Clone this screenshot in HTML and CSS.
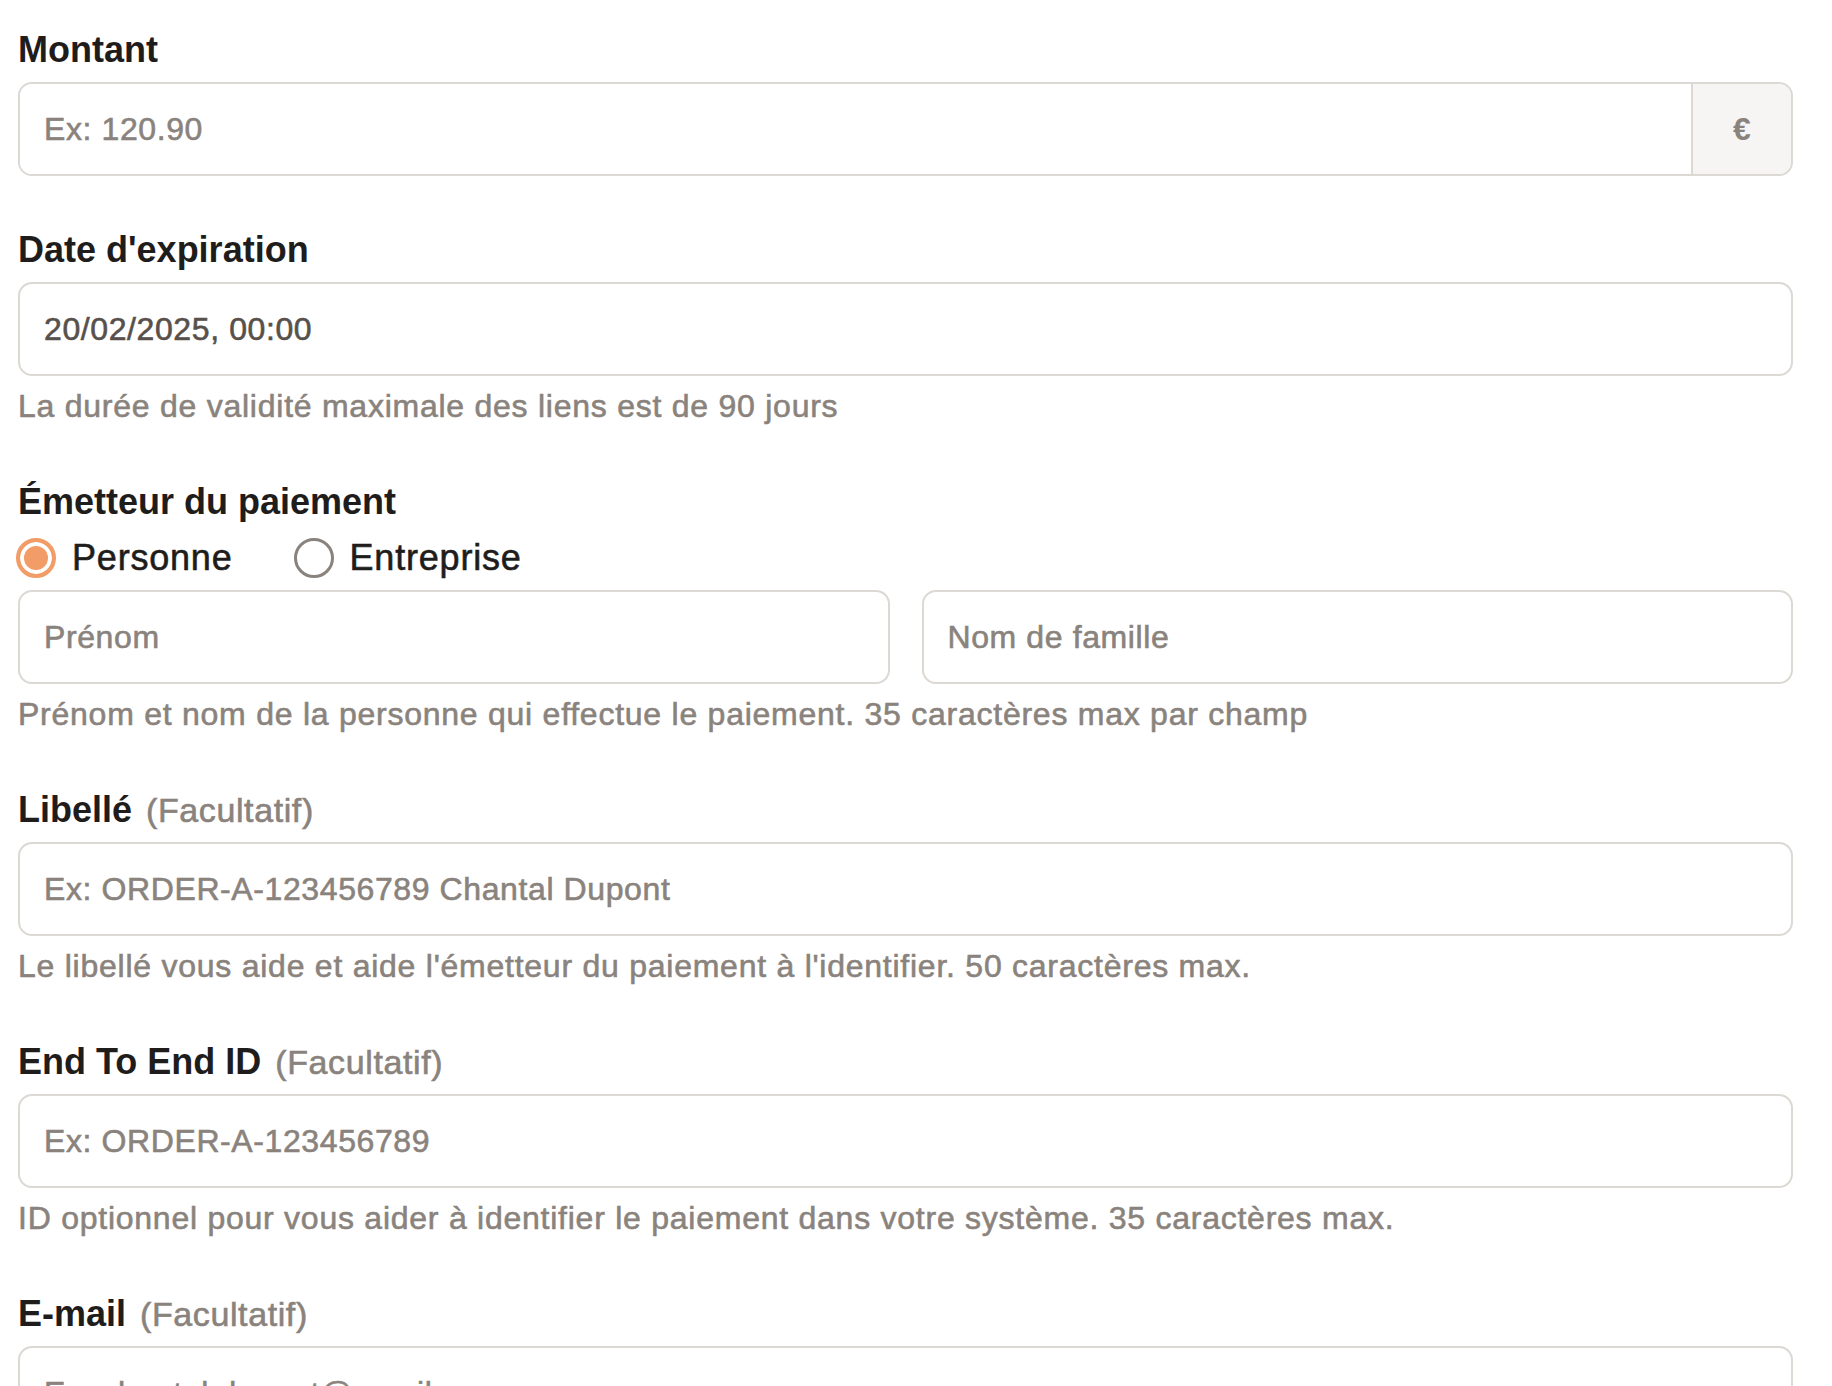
FILE: index.html
```html
<!DOCTYPE html>
<html lang="fr">
<head>
    <meta charset="UTF-8">
    <meta name="viewport" content="width=device-width, initial-scale=1.0">
    <title>Lien de paiement</title>
    <link rel="stylesheet" href="styles.css">
</head>
<body>
    <form class="payment-form">
        <div class="field">
            <label class="field-label" for="amount">Montant</label>
            <div class="input-group">
                <input type="text" class="input" id="amount" placeholder="Ex: 120.90">
                <span class="addon">€</span>
            </div>
        </div>

        <div class="field">
            <label class="field-label" for="expiry">Date d'expiration</label>
            <input type="text" class="input input-filled" id="expiry" value="20/02/2025, 00:00">
            <p class="hint">La durée de validité maximale des liens est de 90 jours</p>
        </div>

        <div class="field">
            <span class="field-label">Émetteur du paiement</span>
            <div class="radio-row">
                <label class="radio-option">
                    <input type="radio" name="payer" class="radio" checked>
                    Personne
                </label>
                <label class="radio-option">
                    <input type="radio" name="payer" class="radio">
                    Entreprise
                </label>
            </div>
            <div class="name-grid">
                <input type="text" class="input" placeholder="Prénom">
                <input type="text" class="input" placeholder="Nom de famille">
            </div>
            <p class="hint">Prénom et nom de la personne qui effectue le paiement. 35 caractères max par champ</p>
        </div>

        <div class="field">
            <label class="field-label" for="label">Libellé <span class="optional">(Facultatif)</span></label>
            <input type="text" class="input" id="label" placeholder="Ex: ORDER-A-123456789 Chantal Dupont">
            <p class="hint">Le libellé vous aide et aide l'émetteur du paiement à l'identifier. 50 caractères max.</p>
        </div>

        <div class="field">
            <label class="field-label" for="e2e">End To End ID <span class="optional">(Facultatif)</span></label>
            <input type="text" class="input" id="e2e" placeholder="Ex: ORDER-A-123456789">
            <p class="hint">ID optionnel pour vous aider à identifier le paiement dans votre système. 35 caractères max.</p>
        </div>

        <div class="field">
            <label class="field-label" for="email">E-mail <span class="optional">(Facultatif)</span></label>
            <input type="text" class="input" id="email" placeholder="Ex: chantal.dupont@gmail.com">
        </div>
    </form>
</body>
</html>
```

FILE: styles.css
```css
body {
    margin: 0;
    font-family: "Liberation Sans", Arial, sans-serif;
    background: #ffffff;
    color: #1f1d1b;
}
.payment-form {
    padding: 26px 39px 0 18px;
}
.field {
    display: flex;
    flex-direction: column;
    margin-bottom: 50px;
}
.field-label {
    font-size: 36px;
    font-weight: bold;
    line-height: 48px;
    margin-bottom: 8px;
    color: #1f1d1b;
}
.optional {
    font-size: 34px;
    font-weight: normal;
    color: #8a837d;
    margin-left: 4px;
    -webkit-text-stroke: 0.6px #8a837d;
    letter-spacing: 0.6px;
}
.input {
    box-sizing: border-box;
    width: 100%;
    height: 94px;
    padding: 0 24px;
    border: 2px solid #dcd8d4;
    border-radius: 14px;
    font-family: inherit;
    font-size: 32px;
    letter-spacing: 0.6px;
    color: #57504b;
    -webkit-text-stroke: 0.6px #57504b;
    background: #ffffff;
    outline: none;
}
.input::placeholder {
    color: #8a837d;
    -webkit-text-stroke: 0.6px #8a837d;
}
.input-group {
    display: flex;
    height: 94px;
    box-sizing: border-box;
    border: 2px solid #dcd8d4;
    border-radius: 14px;
    overflow: hidden;
}
.input-group .input {
    height: 100%;
    border: none;
    border-radius: 0;
    flex: 1;
}
.addon {
    width: 98px;
    display: flex;
    align-items: center;
    justify-content: center;
    background: #f6f5f3;
    border-left: 2px solid #dcd8d4;
    font-size: 32px;
    font-weight: bold;
    color: #8a837d;
}
.hint {
    margin: 8px 0 0;
    font-size: 32px;
    line-height: 44px;
    letter-spacing: 0.75px;
    color: #8a837d;
    -webkit-text-stroke: 0.6px #8a837d;
}
.radio-row {
    display: flex;
    gap: 61px;
    height: 48px;
    align-items: center;
    margin: 0 0 8px -2px;
}
.radio-option {
    display: flex;
    align-items: center;
    gap: 16px;
    font-size: 36px;
    color: #1f1d1b;
    -webkit-text-stroke: 0.6px #1f1d1b;
    letter-spacing: 0.8px;
}
.radio {
    appearance: none;
    -webkit-appearance: none;
    margin: 0;
    width: 40px;
    height: 40px;
    box-sizing: border-box;
    border: 3px solid #8a837d;
    border-radius: 50%;
    background: #ffffff;
}
.radio:checked {
    border: 4px solid #f29d67;
    background: #f29d67;
    box-shadow: inset 0 0 0 4px #ffffff;
}
.name-grid {
    display: grid;
    grid-template-columns: 1fr 1fr;
    gap: 32px;
}
```
